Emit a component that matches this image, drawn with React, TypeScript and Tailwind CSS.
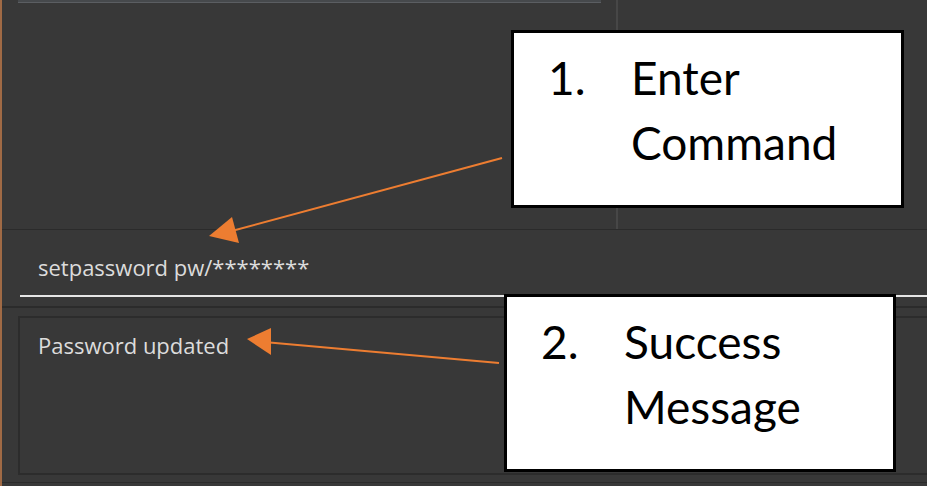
import type { ReactNode } from "react";

function Callout({ num, lines, className }: { num: string; lines: string[]; className: string }) {
  return (
    <div
      className={`absolute flex border-[3px] border-black bg-white text-black ${className}`}
      style={{ fontFamily: "Lato, 'Liberation Sans', sans-serif" }}
    >
      <div className="w-[83px] text-[46px] leading-[65px]">{num}</div>
      <div className="flex flex-col text-[46px] leading-[65px]">
        {lines.map((l) => (
          <span key={l}>{l}</span>
        ))}
      </div>
    </div>
  );
}

function Arrows() {
  return (
    <svg className="pointer-events-none absolute inset-0" width="927" height="486">
      <line x1="500" y1="158" x2="226" y2="232" stroke="#ED7D31" strokeWidth="2" />
      <polygon points="207,236 230,217 237,243" fill="#ED7D31" />
      <line x1="497" y1="363" x2="262" y2="342" stroke="#ED7D31" strokeWidth="2" />
      <polygon points="245,339 269,328 269,355" fill="#ED7D31" />
    </svg>
  );
}

function Panel({ children, className }: { children?: ReactNode; className?: string }) {
  return <div className={className}>{children}</div>;
}

export default function App() {
  return (
    <div
      className="relative h-[486px] w-[927px] overflow-hidden border-l-2 border-[#a06a45] bg-[#383838] text-[#dcdcdc]"
      style={{ fontFamily: "'Open Sans', 'Noto Sans', sans-serif" }}
    >
      <div className="flex h-[229px]">
        <Panel className="w-[614px] pl-[16px]">
          <div className="h-[3px] w-[583px] border-b border-[#5b5e62] bg-[#46494c]" />
        </Panel>
        <Panel className="w-[2px] bg-[#474747]" />
        <Panel className="flex-1" />
      </div>
      <div className="h-px bg-[#2b2b2b]" />
      <div className="flex h-[76px] flex-col pl-[18px]">
        <div className="pl-[18px] pt-[22px] text-[22px] leading-[30px]">setpassword pw/********</div>
        <div className="mt-auto mb-[9px] h-[2px] bg-[#e6e6e6]" />
      </div>
      <div className="h-[2px] bg-[#2b2b2b]" />
      <div className="pl-[16px] pt-[8px]">
        <div className="h-[159px] border-2 border-r-0 border-[#2c2c2c] px-[18px] pt-[12px] text-[22px] leading-[30px]">
          Password updated
        </div>
      </div>
      <div className="mt-[7px] h-px bg-[#2b2b2b]" />

      <Arrows />
      <Callout num="1." lines={["Enter", "Command"]} className="left-[509px] top-[30px] h-[178px] w-[393px] pl-[34px] pt-[12px]" />
      <Callout num="2." lines={["Success", "Message"]} className="left-[502px] top-[294px] h-[178px] w-[392px] pl-[34px] pt-[12px]" />
    </div>
  );
}
